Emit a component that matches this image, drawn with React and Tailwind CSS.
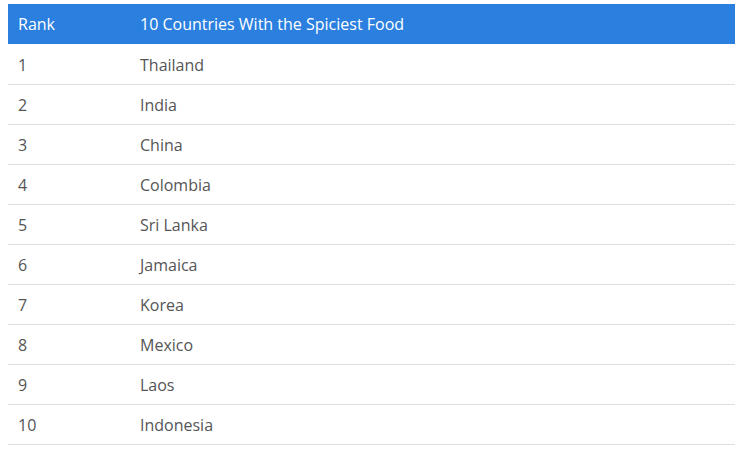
import React from "react";

const countries = [
  "Thailand",
  "India",
  "China",
  "Colombia",
  "Sri Lanka",
  "Jamaica",
  "Korea",
  "Mexico",
  "Laos",
  "Indonesia",
];

export default function App() {
  return (
    <div className="bg-white min-h-screen pt-[4px] pl-[8px]" style={{ fontFamily: '"Open Sans", sans-serif' }}>
      <div className="w-[727px] text-[16px]">
        <div className="flex h-[40px] items-center bg-[#2b7fdf] text-white">
          <div className="w-[132px] pl-[10px]">Rank</div>
          <div>10 Countries With the Spiciest Food</div>
        </div>
        <div className="pt-[1px]">
          {countries.map((name, i) => (
            <div key={name} className="flex h-[40px] items-center border-b border-[#dedede] text-[#555]">
              <div className="w-[132px] pl-[10px]">{i + 1}</div>
              <div>{name}</div>
            </div>
          ))}
        </div>
      </div>
    </div>
  );
}
